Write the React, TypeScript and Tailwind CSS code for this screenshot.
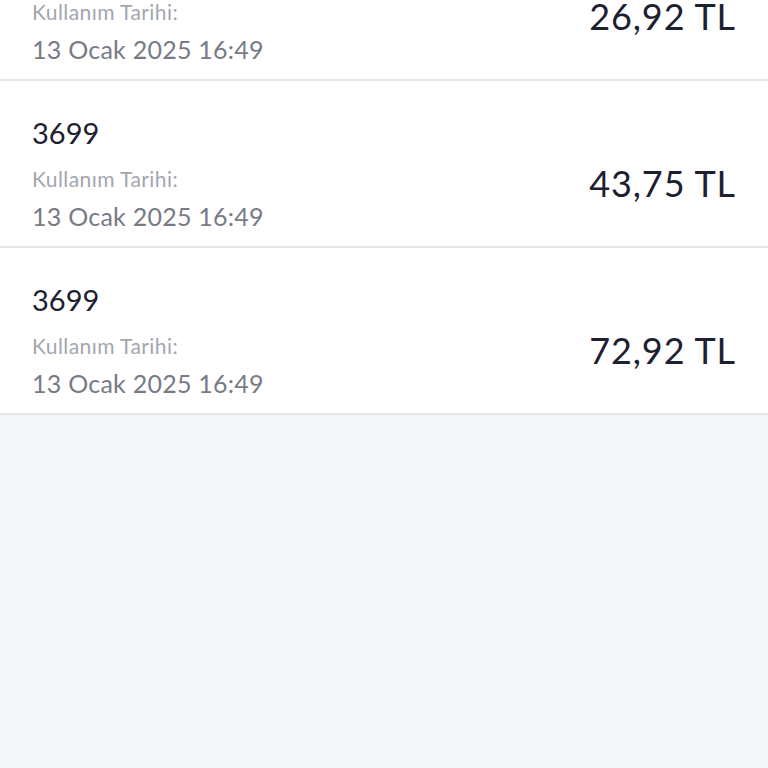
import React from "react";

const rows = [
  { code: "3699", amount: "26,92 TL" },
  { code: "3699", amount: "43,75 TL" },
  { code: "3699", amount: "72,92 TL" },
];

export default function App() {
  return (
    <div
      className="w-[768px] h-[768px] overflow-hidden bg-[#f5f6f8]"
      style={{ fontFamily: "Lato, 'Open Sans', sans-serif" }}
    >
      <div className="-mt-[86px] flex flex-col">
        {rows.map((r, i) => (
          <div
            key={i}
            className="flex items-center justify-between bg-white px-8 pt-[35px] pb-[14px] border-b-2 border-[#e4e6ea]"
          >
            <div className="flex flex-col">
              <div className="text-[29px] leading-[34px] text-[#1c2030]">{r.code}</div>
              <div className="mt-[15px] text-[21px] leading-[28px] tracking-[0.02em] text-[#a2a6b0]">Kullanım Tarihi:</div>
              <div className="mt-[7px] text-[25px] leading-[32px] tracking-[0.01em] text-[#767b86]">13 Ocak 2025 16:49</div>
            </div>
            <div className="mt-[18px] text-[36px] leading-[40px] tracking-[0.025em] text-[#1c2030]">{r.amount}</div>
          </div>
        ))}
      </div>
    </div>
  );
}
